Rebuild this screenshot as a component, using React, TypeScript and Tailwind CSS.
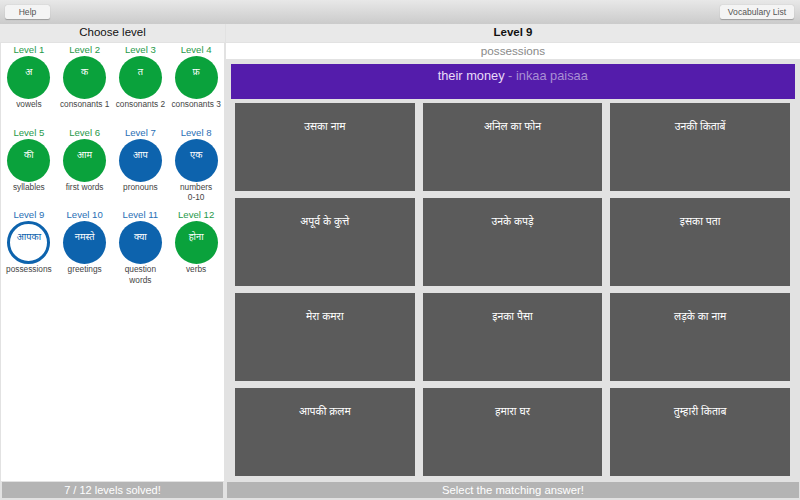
const levels = [
  { label: "Level 1", glyph: "अ", name: "vowels", state: "done" },
  { label: "Level 2", glyph: "क", name: "consonants 1", state: "done" },
  { label: "Level 3", glyph: "त", name: "consonants 2", state: "done" },
  { label: "Level 4", glyph: "फ़", name: "consonants 3", state: "done" },
  { label: "Level 5", glyph: "की", name: "syllables", state: "done" },
  { label: "Level 6", glyph: "आम", name: "first words", state: "done" },
  { label: "Level 7", glyph: "आप", name: "pronouns", state: "open" },
  { label: "Level 8", glyph: "एक", name: "numbers 0-\u206010", state: "open" },
  { label: "Level 9", glyph: "आपका", name: "possessions", state: "active" },
  { label: "Level 10", glyph: "नमस्ते", name: "greetings", state: "open" },
  { label: "Level 11", glyph: "क्या", name: "question words", state: "open" },
  { label: "Level 12", glyph: "होना", name: "verbs", state: "done" },
];

const answers = [
  "उसका नाम",
  "अनिल का फोन",
  "उनकी किताबें",
  "अपूर्व के कुत्ते",
  "उनके कपड़े",
  "इसका पता",
  "मेरा कमरा",
  "इनका पैसा",
  "लड़के का नाम",
  "आपकी क़लम",
  "हमारा घर",
  "तुम्हारी किताब",
];

function ToolbarButton({ children, className }: { children: string; className: string }) {
  return (
    <button
      type="button"
      className={`flex h-[14px] items-center justify-center rounded-[2px] bg-[#f4f4f4] text-[8.6px] text-[#555] shadow-[0_0.5px_1px_rgba(0,0,0,0.25)] ${className}`}
    >
      {children}
    </button>
  );
}

function LevelItem({ level }: { level: (typeof levels)[number] }) {
  const isDone = level.state === "done";
  const circle =
    level.state === "active"
      ? "border-[3px] border-[#0d63ad] bg-white text-[#0d63ad]"
      : isDone
        ? "bg-[#0aa23c] text-white"
        : "bg-[#0d63ad] text-white";
  return (
    <div className="flex h-[82.5px] flex-col items-center">
      <div className={`h-[12px] text-[9.6px] leading-[12px] ${isDone ? "text-[#1f9a4a]" : "text-[#2a6fb5]"}`}>
        {level.label}
      </div>
      <div className={`flex h-[43px] w-[43px] shrink-0 justify-center rounded-full ${circle}`}>
        <span className={`text-[9.3px] leading-[14px] ${level.state === "active" ? "mt-[6px]" : "mt-[9px]"}`}>
          {level.glyph}
        </span>
      </div>
      <div className="w-[50px] text-center text-[8.3px] leading-[10.5px] text-[#444]">{level.name}</div>
    </div>
  );
}

export default function App() {
  return (
    <div className="flex h-[500px] w-[800px] flex-col overflow-hidden bg-[#e2e2e2] font-['Helvetica_Neue','Liberation_Sans','Noto_Sans',sans-serif]">
      <div className="flex h-[24px] shrink-0 items-start justify-between bg-gradient-to-b from-[#e8e8e8] to-[#cbcbcb] pl-[5px] pr-[6px] pt-[5px]">
        <ToolbarButton className="w-[45px]">Help</ToolbarButton>
        <ToolbarButton className="w-[74px]">Vocabulary List</ToolbarButton>
      </div>

      <div className="flex min-h-0 flex-1 gap-[1px]">
        <div className="flex w-[225px] shrink-0 flex-col">
          <div className="flex h-[18px] shrink-0 items-center justify-center bg-[#e9e9e9] text-[11.5px] text-[#111]">
            Choose level
          </div>
          <div className="mx-[1px] mt-[1px] grid flex-1 auto-rows-min grid-cols-4 bg-white pt-[1px]">
            {levels.map((level) => (
              <LevelItem key={level.label} level={level} />
            ))}
          </div>
          <div className="mx-[2px] mb-[2px] mt-[1px] flex h-[16px] shrink-0 items-center justify-center bg-[#b4b4b4] text-[11px] text-white">
            7 / 12 levels solved!
          </div>
        </div>

        <div className="flex min-w-0 flex-1 flex-col">
          <div className="flex h-[18px] shrink-0 items-center justify-center bg-[#e9e9e9] text-[11.5px] font-bold text-[#111]">
            Level 9
          </div>
          <div className="mt-[1px] flex h-[16px] shrink-0 items-center justify-center bg-white text-[11.7px] text-[#8a8a8a]">
            possessions
          </div>
          <div className="ml-[5px] mr-[5.5px] mt-[5px] flex h-[35px] shrink-0 justify-center bg-[#541cab] pt-[3px] text-[12.8px] leading-[17px] text-[#eadcf8]">
            <span>
              their money <span className="text-[#a98fd4]">- inkaa paisaa</span>
            </span>
          </div>
          <div className="ml-[9px] mr-[10px] mt-[4px] grid h-[373px] shrink-0 grid-cols-3 grid-rows-4 gap-x-[8px] gap-y-[7px]">
            {answers.map((answer) => (
              <div key={answer} className="flex justify-center bg-[#5b5b5b] pt-[15px] text-[10.5px] leading-[16px] text-white">
                {answer}
              </div>
            ))}
          </div>
          <div className="mx-[1px] mb-[2px] mt-auto flex h-[16px] shrink-0 items-center justify-center bg-[#b4b4b4] text-[11.3px] text-white">
            Select the matching answer!
          </div>
        </div>
      </div>
    </div>
  );
}
